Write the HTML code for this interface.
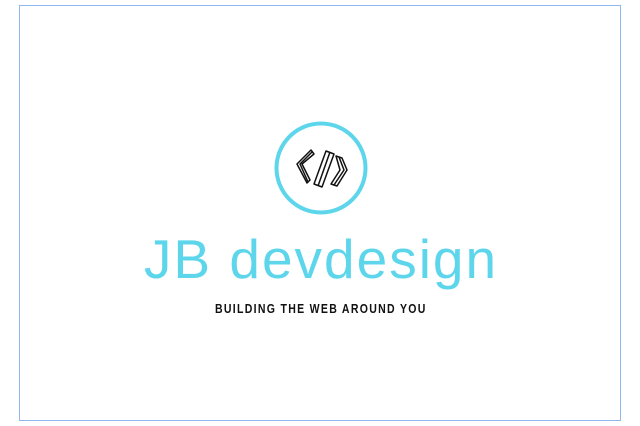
<!DOCTYPE html>
<html><head><style>
html,body{margin:0;padding:0;background:#fff;}
body{width:640px;height:426px;position:relative;overflow:hidden;font-family:"Liberation Sans",sans-serif;}
.frame{position:absolute;left:19px;top:5px;width:600px;height:414px;border:1.5px solid #8fb8f0;}
.t1{position:absolute;left:0;width:642px;text-align:center;top:224px;font-size:55px;color:#5dd6ec;letter-spacing:2px;line-height:70px;}
.t2{position:absolute;left:215px;top:301px;font-size:13px;font-weight:bold;color:#111;letter-spacing:1.6px;white-space:nowrap;transform:scaleX(0.81);transform-origin:left top;}
</style></head><body>
<div class="frame"></div>
<svg width="640" height="426" style="position:absolute;left:0;top:0">
<circle cx="321" cy="168" r="44.5" fill="none" stroke="#5dd6ec" stroke-width="4"/>
<g fill="none" stroke="#111" stroke-width="1.5" stroke-linejoin="round">
<polygon points="311,150 314,154 302,164 310,180 307,183 297,164"/>
<polyline points="312,152 300,164 308,182"/>
<polygon points="326,151 334,154 322,187 314,184"/>
<line x1="330" y1="152" x2="318" y2="186"/>
<polygon points="336,156 342,158 347,170 337,186 331,184 340,170"/>
<polyline points="339,157 344,170 334,185"/>
</g>
</svg>
<div class="t1">JB devdesign</div>
<div class="t2">BUILDING THE WEB AROUND YOU</div>
</body></html>
